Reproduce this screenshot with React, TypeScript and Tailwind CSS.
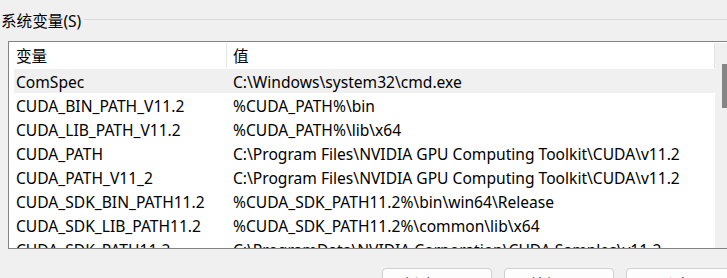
const rows: [string, string][] = [
  ["ComSpec", "C:\\Windows\\system32\\cmd.exe"],
  ["CUDA_BIN_PATH_V11.2", "%CUDA_PATH%\\bin"],
  ["CUDA_LIB_PATH_V11.2", "%CUDA_PATH%\\lib\\x64"],
  ["CUDA_PATH", "C:\\Program Files\\NVIDIA GPU Computing Toolkit\\CUDA\\v11.2"],
  ["CUDA_PATH_V11_2", "C:\\Program Files\\NVIDIA GPU Computing Toolkit\\CUDA\\v11.2"],
  ["CUDA_SDK_BIN_PATH11.2", "%CUDA_SDK_PATH11.2%\\bin\\win64\\Release"],
  ["CUDA_SDK_LIB_PATH11.2", "%CUDA_SDK_PATH11.2%\\common\\lib\\x64"],
  ["CUDA_SDK_PATH11.2", "C:\\ProgramData\\NVIDIA Corporation\\CUDA Samples\\v11.2"],
];

export default function App() {
  return (
    <div
      className="w-[727px] h-[278px] overflow-hidden bg-[#f0f0f0] text-[15.6px] text-black"
      style={{ fontFamily: '"Noto Sans", "Noto Sans CJK SC", sans-serif' }}
    >
      {/* 分组标题 */}
      <div className="flex items-center h-[41px] pl-px pb-[3px]">
        <span className="leading-none pt-[5px]">系统变量(S)</span>
        <div className="flex-1 h-px bg-[#dadada] ml-[3px]" />
      </div>

      {/* 列表 */}
      <div className="ml-[8px] w-[725px] h-[208px] border border-[#838383] bg-white flex overflow-hidden">
        <div className="w-[706px] flex flex-col">
          <div className="flex shrink-0 h-[27px] ml-[5px] items-center">
            <div className="w-[212px] pl-[2px] pt-[2px]">变量</div>
            <div className="flex-1 h-[25px] pl-[6px] pt-[2px] flex items-center border-l border-r border-[#e5e5e5]">值</div>
          </div>
          {rows.map(([name, value], i) => (
            <div
              key={name}
              className={`flex shrink-0 h-[24px] ml-[5px] pt-[3px] items-center whitespace-nowrap ${i === 0 ? "bg-[#f0f0f0]" : ""}`}
            >
              <div className="w-[212px] pl-[2px]">{name}</div>
              <div className="pl-[7px]">{value}</div>
            </div>
          ))}
        </div>
        <div className="w-[17px] bg-[#f0f0f0] mt-px pl-[7px] pt-[21px]">
          <div className="w-[8px] h-[44px] bg-[#858585]" />
        </div>
      </div>

      {/* 按钮 */}
      <div className="flex gap-[12px] pl-[382px] pt-[19px]">
        {["新建(W)...", "编辑(I)...", "删除(L)"].map((t) => (
          <div
            key={t}
            className="w-[110px] h-[30px] shrink-0 rounded-[4px] border border-[#d0d0d0] bg-[#fdfdfd] flex items-center justify-center pt-[5px]"
          >
            {t}
          </div>
        ))}
      </div>
    </div>
  );
}
